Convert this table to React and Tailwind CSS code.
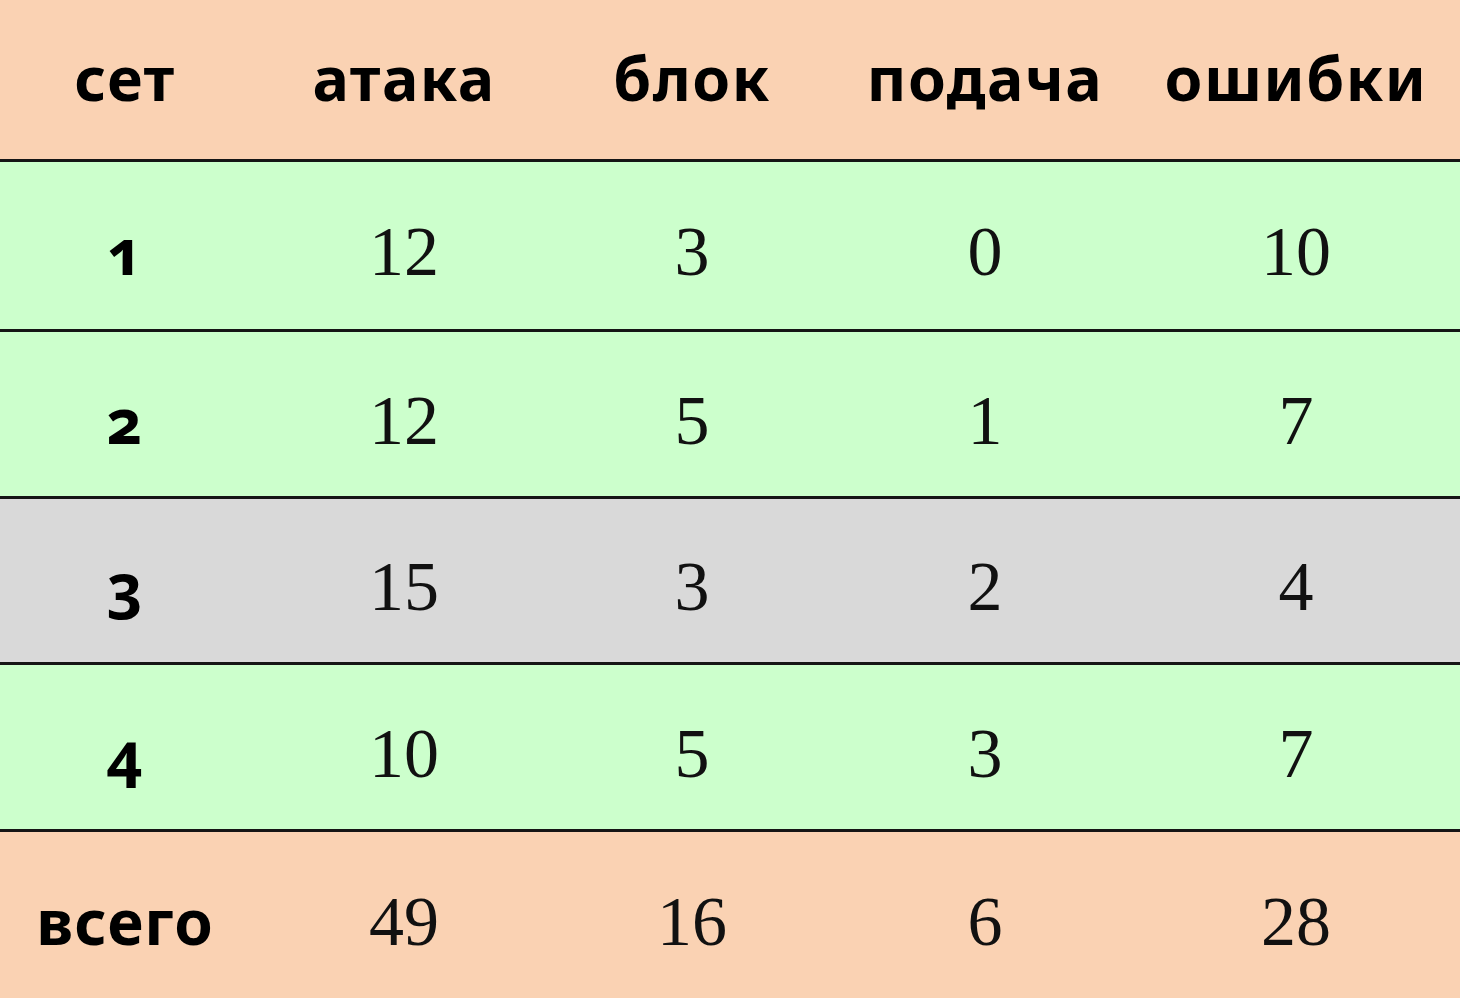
const head = ["сет", "атака", "блок", "подача", "ошибки"];

const rows = [
  { set: "1", cells: ["12", "3", "0", "10"], bg: "bg-[#ccffcc]", h: "h-[170px]" },
  { set: "2", cells: ["12", "5", "1", "7"], bg: "bg-[#ccffcc]", h: "h-[167px]" },
  { set: "3", cells: ["15", "3", "2", "4"], bg: "bg-[#d9d9d9]", h: "h-[166px]" },
  { set: "4", cells: ["10", "5", "3", "7"], bg: "bg-[#ccffcc]", h: "h-[167px]" },
  { set: "всего", cells: ["49", "16", "6", "28"], bg: "bg-[#fad2b3]", h: "h-[169px]" },
];

const grid = "grid grid-cols-[250px_308px_268px_318px_1fr] items-center";

export default function App() {
  return (
    <div className="w-[1460px] h-[998px] overflow-hidden bg-[#fad2b3]">
      <div className={`${grid} h-[159px] bg-[#fad2b3] pb-[4px] font-['Noto_Sans',sans-serif] font-bold text-[61px] text-black tracking-[1.5px]`}>
        {head.map((h, i) => (
          <div key={h} className={`text-center ${i === 4 ? "pr-[12px]" : ""}`}>{h}</div>
        ))}
      </div>
      {rows.map((r) => (
        <div key={r.set} className={`${grid} ${r.h} ${r.bg} border-t-[3px] border-[#151515] pt-[12px]`}>
          <div className="text-center font-['Noto_Sans',sans-serif] font-bold text-[62px] tracking-[1px] oldstyle-nums text-black">{r.set}</div>
          {r.cells.map((c, i) => (
            <div key={i} className={`text-center font-['Liberation_Serif',serif] text-[70px] text-[#111] ${i === 3 ? "pr-[12px]" : ""}`}>{c}</div>
          ))}
        </div>
      ))}
    </div>
  );
}
